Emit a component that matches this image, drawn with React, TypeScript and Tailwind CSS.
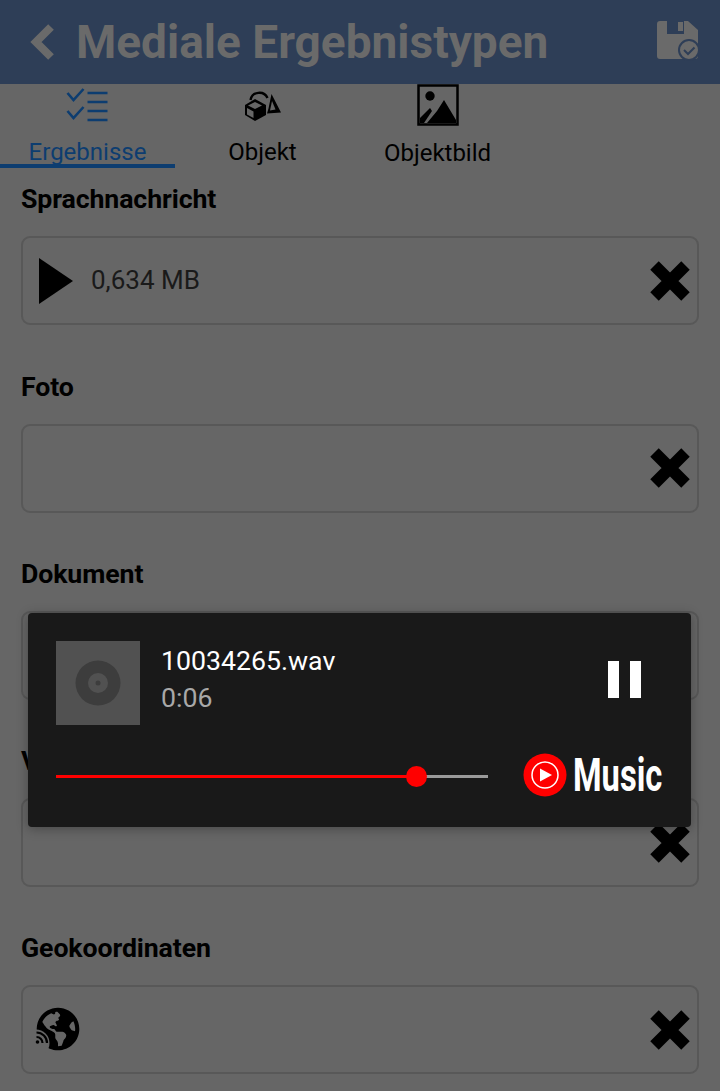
import type { ReactNode } from "react";
import { FaGlobeAmericas } from "react-icons/fa";

const tabs = [
  { label: "Ergebnisse", active: true, icon: <ChecklistIcon /> },
  { label: "Objekt", active: false, icon: <ShapesIcon /> },
  { label: "Objektbild", active: false, icon: <PictureIcon /> },
];

function ChecklistIcon() {
  return (
    <svg width="44" height="40" viewBox="0 0 44 40" fill="none" stroke="#0d3d70" strokeWidth="2.6">
      <path d="M1.500 8l6 7 10-11" />
      <path d="M1.500 26l6 7 10-11" />
      <path d="M21.500 8h20M21.500 17h20M21.500 26h20M21.500 35h20" />
    </svg>
  );
}

function ShapesIcon() {
  return (
    <svg width="40" height="40" viewBox="0 0 40 40">
      <path d="M7.500 15a9 9 0 0 1 17 -2" fill="none" stroke="#000" strokeWidth="2.400" />
      <path d="M28.500 9l9.500 18.500-14 1 1.500-5z" fill="#000" />
      <path d="M29 16l3.500 8.500-5.500 1z" fill="#666" />
      <path d="M12 14l11 6v10l-11 6-10-6V20z" fill="#000" />
      <path d="M12 17l7 3.500-7 3.500-7-3.500z" fill="#666" />
      <path d="M4 23l6.500 3.500V33L4 29.500z" fill="#666" />
    </svg>
  );
}

function PictureIcon() {
  return (
    <svg width="42" height="42" viewBox="0 0 42 42">
      <rect x="1.500" y="1.500" width="39" height="39" fill="none" stroke="#000" strokeWidth="2.500" />
      <circle cx="13" cy="12" r="4.700" fill="#000" />
      <path d="M10 39l10-12 7-11 12 20v3z" fill="#000" />
      <path d="M3 34l10-10 2 3-8 12H3z" fill="#000" />
    </svg>
  );
}

function CloseIcon() {
  return (
    <svg width="42" height="42" viewBox="0 0 42 42" stroke="#000" strokeWidth="12">
      <path d="M5.500 5.500l31 31M36.500 5.500l-31 31" />
    </svg>
  );
}

function SaveIcon() {
  return (
    <svg width="42" height="42" viewBox="0 0 42 42">
      <path d="M3 0h28l10 9v26a3 3 0 0 1-3 3H3a3 3 0 0 1-3-3V3a3 3 0 0 1 3-3z" fill="#6a6a6a" />
      <path d="M10 0h17v13H10z" fill="#2e3e57" />
      <path d="M21 1h5v9h-5z" fill="#6a6a6a" />
      <circle cx="32" cy="29" r="10" fill="#6a6a6a" stroke="#2e3e57" strokeWidth="2" />
      <path d="M27 29l4 4 6.500-6.500" fill="none" stroke="#2e3e57" strokeWidth="2" />
    </svg>
  );
}

function DiscArt() {
  return (
    <div className="w-[84px] h-[84px] bg-[#515151] flex items-center justify-center shrink-0">
      <svg width="46" height="46" viewBox="0 0 46 46">
        <circle cx="23" cy="23" r="22.500" fill="#3d3d3d" />
        <circle cx="23" cy="23" r="10" fill="#515151" />
        <circle cx="23" cy="23" r="2.500" fill="#3d3d3d" />
      </svg>
    </div>
  );
}

function GlobeIcon() {
  return (
    <div className="relative w-[48px] h-[46px]">
      <FaGlobeAmericas className="absolute left-[1px] top-0 text-[44px] text-black" />
      <svg className="absolute left-0 top-0" width="48" height="46" viewBox="0 0 48 46">
        <circle cx="1" cy="36" r="13.500" fill="#666" />
        <circle cx="2.500" cy="35" r="1.800" fill="#000" />
        <path d="M1.500 30a6 6 0 0 1 6 6M1.500 25.500a10.500 10.500 0 0 1 10.500 10.500" fill="none" stroke="#000" strokeWidth="2.200" />
      </svg>
    </div>
  );
}

function Field({ label, children }: { label: string; children?: ReactNode }) {
  return (
    <div className="flex flex-col">
      <div className="h-[37px] text-[26.7px] leading-[30px] font-bold text-black tracking-[-0.1px] mb-[15px]">{label}</div>
      <div className="h-[89px] rounded-[9px] border-2 border-[#585858] flex items-center pl-[12px] pr-[6px]">
        <div className="flex-1 flex items-center min-w-0">{children}</div>
        <CloseIcon />
      </div>
    </div>
  );
}

export default function App() {
  return (
    <div className="relative w-[720px] h-[1091px] overflow-hidden bg-[#666666] font-['Roboto',sans-serif]">
      <header className="h-[84px] bg-[#2e3e57] flex items-center pl-[29px] pr-[21px]">
        <svg width="26" height="36" viewBox="0 0 26 36" fill="none" stroke="#6a6a6a" strokeWidth="8" className="mr-[21px]">
          <path d="M22 3L7 18l15 15" />
        </svg>
        <h1 className="flex-1 text-[46px] leading-none font-bold text-[#6a6a6a]">Mediale Ergebnistypen</h1>
        <SaveIcon />
      </header>

      <nav className="flex h-[84px]">
        {tabs.map((tab) => (
          <div
            key={tab.label}
            className={`w-[175px] h-[84px] flex flex-col items-center border-b-4 ${tab.active ? "border-[#0d3d70] text-[#0d3d70]" : "border-transparent text-black"}`}
          >
            <div className="h-[42px] flex items-center">{tab.icon}</div>
            <span className="text-[24px] leading-[24px] mt-[15px]">{tab.label}</span>
          </div>
        ))}
      </nav>

      <main className="px-[21px] pt-[16.4px] flex flex-col gap-[46.25px]">
        <Field label="Sprachnachricht">
          <svg width="36" height="48" viewBox="0 0 36 48" className="ml-[3px]">
            <path d="M1 1l34 23L1 47z" fill="#000" />
          </svg>
          <span className="ml-[17px] text-[26px] text-[#1a1a1a]">0,634 MB</span>
        </Field>
        <Field label="Foto" />
        <Field label="Dokument" />
        <Field label="Video" />
        <Field label="Geokoordinaten">
          <GlobeIcon />
        </Field>
      </main>

      <div className="absolute left-[28px] top-[613px] w-[663px] h-[214px] rounded-[4px] bg-[#191919] shadow-[0_2px_12px_rgba(0,0,0,0.3)] px-[28px] pt-[28px]">
        <div className="flex">
          <DiscArt />
          <div className="ml-[21px] flex-1 pt-[2px]">
            <div className="text-[26.7px] leading-[37px] text-white">10034265.wav</div>
            <div className="text-[26.7px] leading-[37px] text-[#a8a8a8]">0:06</div>
          </div>
          <div className="flex gap-[11px] mt-[20px] mr-[22px] h-[37px]">
            <div className="w-[11px] bg-white" />
            <div className="w-[11px] bg-white" />
          </div>
        </div>
        <div className="flex items-center mt-[27px]">
          <div className="relative w-[432px] h-[3px] mt-[2px] shrink-0 bg-[#9a9a9a]">
            <div className="w-[361px] h-[3px] bg-[#ff0000]" />
            <div className="absolute left-[350px] top-[-9px] w-[21px] h-[21px] rounded-full bg-[#ff0000]" />
          </div>
          <svg width="44" height="44" viewBox="0 0 44 44" className="ml-[35px] shrink-0">
            <circle cx="22" cy="22" r="21.500" fill="#ff0000" />
            <circle cx="22" cy="22" r="13" fill="none" stroke="#fff" strokeWidth="1.500" />
            <path d="M17 15.500L29 22l-12 6.500z" fill="#fff" />
          </svg>
          <span className="ml-[6px] w-[90px] shrink-0 inline-block origin-left scale-x-[0.71] text-[46px] leading-none font-bold text-white whitespace-nowrap">Music</span>
        </div>
      </div>
    </div>
  );
}
